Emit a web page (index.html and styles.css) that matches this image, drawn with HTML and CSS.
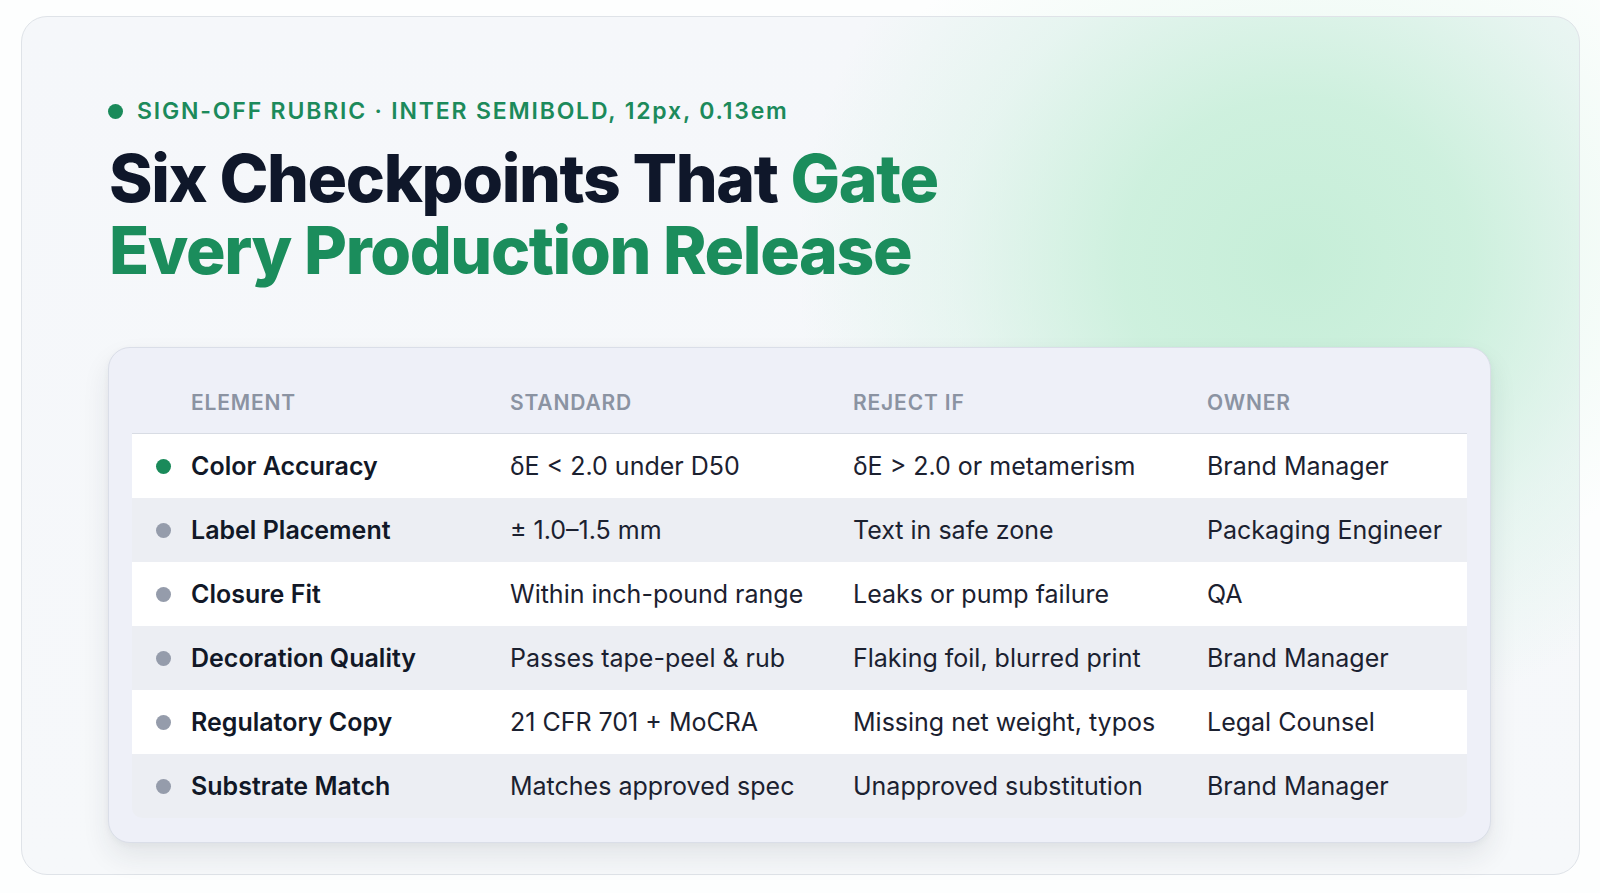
FILE: index.html
```html
<!DOCTYPE html>
<html lang="en">
<head>
<meta charset="utf-8">
<title>Sign-off Rubric</title>
<link rel="stylesheet" href="styles.css">
</head>
<body>
<main class="frame">
  <header class="intro">
    <p class="eyebrow"><span class="eyebrow-dot"></span>SIGN-OFF RUBRIC · INTER SEMIBOLD, 12px, 0.13em</p>
    <h1 class="title">Six Checkpoints That <span class="accent">Gate</span><br><span class="accent">Every Production Release</span></h1>
  </header>

  <section class="rubric">
    <div class="grid head">
      <div class="cell first">ELEMENT</div>
      <div class="cell">STANDARD</div>
      <div class="cell">REJECT IF</div>
      <div class="cell">OWNER</div>
    </div>
    <div class="rows">
      <div class="grid row">
        <div class="cell name"><span class="dot active"></span>Color Accuracy</div>
        <div class="cell">δE &lt; 2.0 under D50</div>
        <div class="cell">δE &gt; 2.0 or metamerism</div>
        <div class="cell">Brand Manager</div>
      </div>
      <div class="grid row alt">
        <div class="cell name"><span class="dot"></span>Label Placement</div>
        <div class="cell">± 1.0–1.5 mm</div>
        <div class="cell">Text in safe zone</div>
        <div class="cell">Packaging Engineer</div>
      </div>
      <div class="grid row">
        <div class="cell name"><span class="dot"></span>Closure Fit</div>
        <div class="cell">Within inch-pound range</div>
        <div class="cell">Leaks or pump failure</div>
        <div class="cell">QA</div>
      </div>
      <div class="grid row alt">
        <div class="cell name"><span class="dot"></span>Decoration Quality</div>
        <div class="cell">Passes tape-peel &amp; rub</div>
        <div class="cell">Flaking foil, blurred print</div>
        <div class="cell">Brand Manager</div>
      </div>
      <div class="grid row">
        <div class="cell name"><span class="dot"></span>Regulatory Copy</div>
        <div class="cell">21 CFR 701 + MoCRA</div>
        <div class="cell">Missing net weight, typos</div>
        <div class="cell">Legal Counsel</div>
      </div>
      <div class="grid row alt">
        <div class="cell name"><span class="dot"></span>Substrate Match</div>
        <div class="cell">Matches approved spec</div>
        <div class="cell">Unapproved substitution</div>
        <div class="cell">Brand Manager</div>
      </div>
    </div>
  </section>
</main>
</body>
</html>
```

FILE: styles.css
```css
* { box-sizing: border-box; }

html, body { height: 100%; }

body {
  margin: 0;
  padding: 16px 20px 0 21px;
  font-family: Inter, "Noto Sans", "Liberation Sans", sans-serif;
  color: #111827;
  background:
    radial-gradient(ellipse 480px 360px at 1300px 230px, rgba(200, 240, 218, 0.5), rgba(200, 240, 218, 0) 100%),
    #fdfefe;
  overflow: hidden;
}

.frame {
  height: 859px;
  border: 1px solid #dfe3e8;
  border-radius: 26px;
  padding: 80px 89px 0 86px;
  background:
    radial-gradient(ellipse 500px 470px at 1275px 245px, #c6eed8 0%, rgba(199, 239, 217, 0.85) 35%, rgba(208, 241, 225, 0.4) 68%, rgba(236, 246, 244, 0) 100%),
    linear-gradient(180deg, #f5f7fa 0%, #f6f8fa 100%);
}

.intro { display: flex; flex-direction: column; gap: 17px; }

.eyebrow {
  margin: 0;
  display: flex;
  align-items: center;
  gap: 14px;
  height: 28px;
  font-size: 23px;
  line-height: 28px;
  font-weight: 600;
  letter-spacing: 0.079em;
  color: #1c8a5b;
}

.eyebrow-dot {
  width: 15px;
  height: 15px;
  border-radius: 50%;
  background: #1a8a5a;
  flex: none;
}

.title {
  margin: 0;
  font-size: 66px;
  line-height: 72px;
  font-weight: 800;
  letter-spacing: -0.021em;
  color: #0f172a;
  padding-left: 1px;
}

.accent { color: #1b8d5c; }

.rubric {
  margin-top: 61px;
  width: 1383px;
  border: 1px solid #dadee8;
  border-radius: 22px;
  background: #eef0f8;
  padding: 23px 23px 24px 23px;
  box-shadow: 0 14px 28px rgba(30, 41, 59, 0.09), 0 2px 6px rgba(30, 41, 59, 0.04);
}

.grid {
  display: grid;
  grid-template-columns: 358px 343px 354px 1fr;
  align-items: center;
}

.head {
  height: 63px;
  border-bottom: 1px solid #d8dce4;
  font-size: 21px;
  font-weight: 600;
  letter-spacing: 0.04em;
  color: #8b93a2;
}

.head .cell { padding-left: 20px; }
.head .cell.first { padding-left: 59px; }

.rows {
  border-radius: 0 0 10px 10px;
  overflow: hidden;
}

.row {
  height: 64px;
  background: #ffffff;
  font-size: 25px;
  color: #1b2130;
}

.row.alt { background: #eceef3; }

.cell { padding-left: 20px; white-space: nowrap; }

.cell.name {
  display: flex;
  align-items: center;
  gap: 20px;
  padding-left: 24px;
  font-weight: 600;
  letter-spacing: 0;
  color: #111827;
}

.dot {
  width: 15px;
  height: 15px;
  border-radius: 50%;
  background: #959cab;
  flex: none;
}

.dot.active { background: #1a8a5a; }
```
